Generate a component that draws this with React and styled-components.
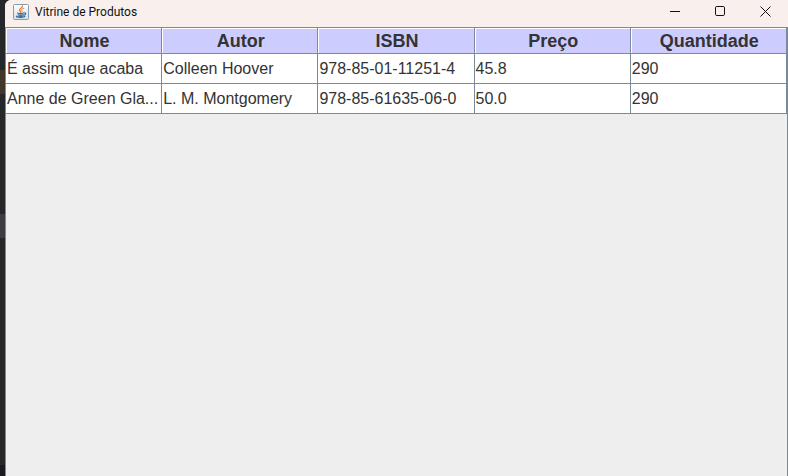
import React from "react";
import styled, { createGlobalStyle } from "styled-components";

const GlobalStyle = createGlobalStyle`
  *, *::before, *::after { box-sizing: border-box; }
  body { margin: 0; background: #262729; }
`;

const Desktop = styled.div`
  display: flex;
  min-height: 100vh;
  background: #262729;
`;

const EditorEdge = styled.div`
  flex: 0 0 5px;
  background: linear-gradient(
    to bottom,
    #262729 0 70px,
    #43372a 70px 94px,
    #262729 94px 214px,
    #3c3d41 214px 238px,
    #262729 238px 465px,
    #191a1d 465px
  );
`;

const Window = styled.main`
  flex: 1;
  min-width: 0;
  display: flex;
  flex-direction: column;
  overflow: hidden;
  border-top-left-radius: 6px;
  background: #eeeeee;
`;

const TitleBar = styled.header`
  display: flex;
  align-items: center;
  height: 27px;
  padding: 0 0 4px 8px;
  background: #f9f0ee;
`;

const Title = styled.h1`
  flex: 1;
  margin: 0 0 0 6px;
  font: 400 12px/16px Roboto, "Noto Sans", sans-serif;
  color: #111111;
  white-space: nowrap;
`;

const WindowButton = styled.button`
  display: flex;
  align-items: center;
  justify-content: center;
  width: 45px;
  height: 23px;
  padding: 0;
  border: 0;
  background: transparent;
  color: #111111;
`;

const ScrollPane = styled.section`
  flex: 1;
  border: 1px solid #7a8a99;
  border-bottom: 0;
`;

const ProductTable = styled.table`
  width: 100%;
  table-layout: fixed;
  border-collapse: separate;
  border-spacing: 0;
  font-family: "Liberation Sans", Arial, sans-serif;
  color: #333333;
`;

const HeaderCell = styled.th`
  height: 26px;
  padding: 0 0 0 2px;
  border: 1px solid #7a8a99;
  border-width: 0 1px 1px 0;
  background: #ccccff;
  box-shadow: inset 1px 1px 0 #ffffff;
  font-size: 18px;
  line-height: 24px;
  font-weight: 700;
  text-align: center;
`;

const Cell = styled.td`
  height: 30px;
  padding: 0 1px;
  border: 1px solid #7a8a99;
  border-width: 0 1px 1px 0;
  background: #ffffff;
  font-size: 16px;
  line-height: 28px;
  white-space: nowrap;
  overflow: hidden;
`;

const columns = ["Nome", "Autor", "ISBN", "Preço", "Quantidade"];
const products = [
  ["É assim que acaba", "Colleen Hoover", "978-85-01-11251-4", "45.8", "290"],
  ["Anne de Green Gla...", "L. M. Montgomery", "978-85-61635-06-0", "50.0", "290"],
];

function JavaIcon() {
  return (
    <svg width="16" height="16" viewBox="0 0 16 16" aria-hidden="true">
      <defs>
        <linearGradient id="tile" x1="0" y1="0" x2="0" y2="1">
          <stop offset="0" stopColor="#ffffff" />
          <stop offset="1" stopColor="#d5dee6" />
        </linearGradient>
      </defs>
      <rect x="0.5" y="0.5" width="15" height="15" rx="1" fill="url(#tile)" stroke="#879bac" />
      <g fill="none" strokeLinecap="round">
        <path d="M9.4 2C9.8 4 6 4.500 6.600 6.300C6.800 7 7.600 7.400 7.600 8.200" stroke="#e5731c" strokeWidth="1.300" />
        <path d="M10.800 4.200C8.800 5 8.300 5.700 8.900 6.500C9.300 7.100 9 7.700 8.500 8.200" stroke="#e88a3c" strokeWidth="1" />
        <path d="M4.600 9C6 9.700 9.300 9.500 10.600 9M5.300 10.700C6.800 11.300 8.800 11.200 10.200 10.700M10.900 9C13.500 8.300 13.100 10.600 11 11.300" stroke="#3e6f94" strokeWidth="1.200" />
        <path d="M4.200 12C2.400 12.600 4 13.300 7.500 13.300C10.800 13.300 12.500 12.700 11.500 12.200M6 12.100H9.500" stroke="#3e6f94" strokeWidth="1.200" />
      </g>
    </svg>
  );
}

function ControlIcon({ children }) {
  return (
    <svg width="11" height="11" viewBox="0 0 11 11" fill="none" stroke="currentColor" aria-hidden="true">
      {children}
    </svg>
  );
}

export default function App() {
  return (
    <Desktop>
      <GlobalStyle />
      <EditorEdge />
      <Window>
        <TitleBar>
          <JavaIcon />
          <Title>Vitrine de Produtos</Title>
          <WindowButton type="button" aria-label="Minimizar">
            <ControlIcon><path d="M0 5.500H10" /></ControlIcon>
          </WindowButton>
          <WindowButton type="button" aria-label="Maximizar">
            <ControlIcon><rect x="0.500" y="0.500" width="9" height="9" rx="1.300" /></ControlIcon>
          </WindowButton>
          <WindowButton type="button" aria-label="Fechar">
            <ControlIcon><path d="M0.500 0.500L10.500 10.500M10.500 0.500L0.500 10.500" /></ControlIcon>
          </WindowButton>
        </TitleBar>
        <ScrollPane>
          <ProductTable aria-label="Produtos">
            <thead>
              <tr>
                {columns.map((name) => (
                  <HeaderCell key={name} scope="col">{name}</HeaderCell>
                ))}
              </tr>
            </thead>
            <tbody>
              {products.map((product) => (
                <tr key={product[2]}>
                  {product.map((value, index) => (
                    <Cell key={columns[index]}>{value}</Cell>
                  ))}
                </tr>
              ))}
            </tbody>
          </ProductTable>
        </ScrollPane>
      </Window>
    </Desktop>
  );
}
